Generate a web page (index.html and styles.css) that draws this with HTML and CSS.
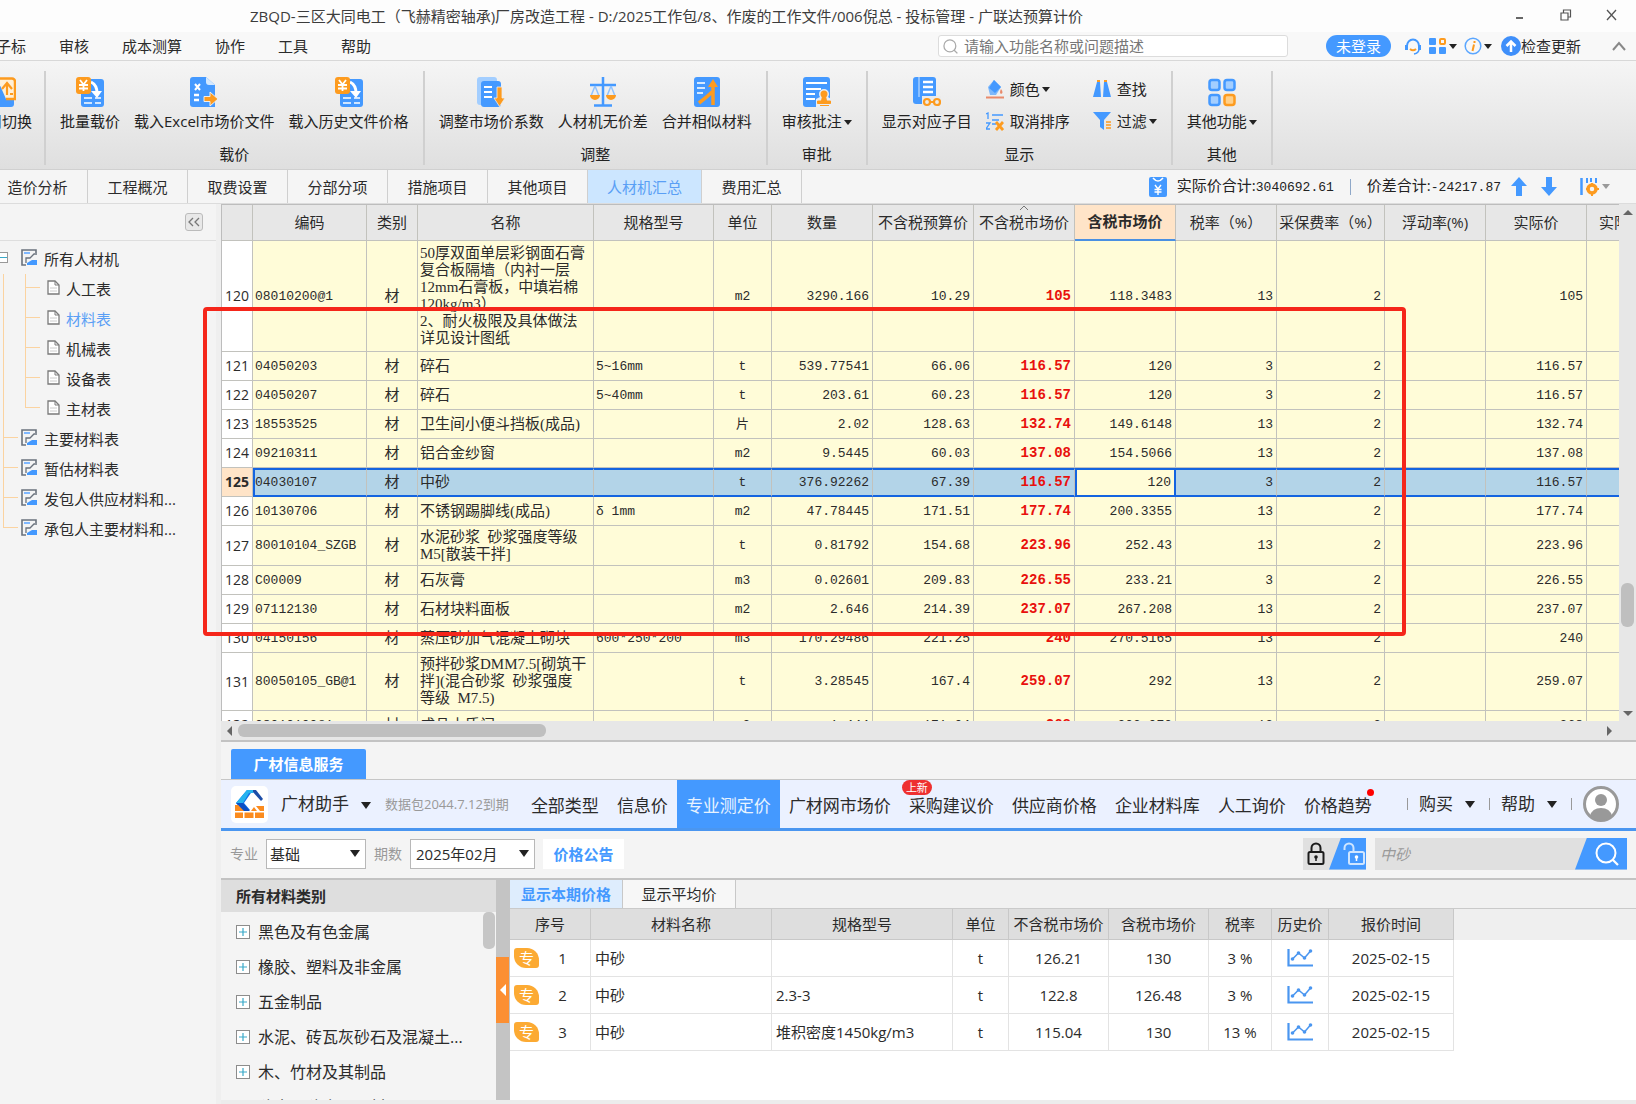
FILE: index.html
```html
<!DOCTYPE html>
<html lang="zh-CN">
<head>
  <meta charset="UTF-8">
  <meta name="viewport" content="width=device-width, initial-scale=1">
  <title>投标管理 - 广联达预算计价</title>
  <link rel="stylesheet" href="styles.css">
</head>
<body>
  <!-- Shared icons -->
  <svg class="sprite" aria-hidden="true">
    <symbol id="i-load" viewBox="0 0 28 30">
      <rect x="5" y="2" width="23" height="28" rx="3" fill="#4499ff"/>
      <path d="M8 21h8M19 21h6M8 26h8M19 26h6" stroke="#cfe5ff" stroke-width="2"/>
      <path d="M15 5q6 3 6 11" fill="none" stroke="#fff" stroke-width="3"/>
      <path d="M15 14h11l-5 7z" fill="#fff"/>
      <rect x="0" y="0" width="15" height="17" rx="3" fill="#fd9b1f"/>
      <path d="M4 3l3.500 4.500L11 3M3 8h9M3 11.500h9M7.500 7v7" fill="none" stroke="#fff" stroke-width="1.800"/>
    </symbol>
    <symbol id="i-excel" viewBox="0 0 28 30">
      <path d="M3 0h13l9 8v22H3a3 3 0 0 1-3-3V3a3 3 0 0 1 3-3z" fill="#4499ff"/>
      <path d="M16 0l9 8h-6a3 3 0 0 1-3-3z" fill="#d5e9ff"/>
      <path d="M5 7l5 6M10 7l-5 6" stroke="#fff" stroke-width="2"/>
      <path d="M4 18h5M4 23h5" stroke="#fff" stroke-width="2.500"/>
      <path d="M14 19.500h6V15l8 7-8 7v-4.500h-6z" fill="#fd9b1f" stroke="#eee" stroke-width="1"/>
    </symbol>
    <symbol id="i-factor" viewBox="0 0 28 30">
      <rect x="0" y="0" width="20" height="28" rx="3" fill="#a3ceff"/>
      <rect x="4" y="4" width="20" height="26" rx="3" fill="#4499ff"/>
      <path d="M7 10h8M7 15h8M7 20h8" stroke="#fff" stroke-width="2"/>
      <path d="M20 10h5v11h3l-5.500 8.500L17 21h3z" fill="#fd9b1f" stroke="#eee" stroke-width=".8"/>
    </symbol>
    <symbol id="i-scale" viewBox="0 0 28 30">
      <path d="M14 0v28M1 8h26M5 28.500h18" stroke="#4499ff" stroke-width="2.500"/>
      <path d="M6 9L2 19M6 9l4 10M22 9l-4 10M22 9l4 10" stroke="#8fc2ff" stroke-width="1.500"/>
      <path d="M1 18h10a5 5 0 0 1-10 0zM17 18h10a5 5 0 0 1-10 0z" fill="#fd9b1f"/>
    </symbol>
    <symbol id="i-merge" viewBox="0 0 28 30">
      <rect x="1" y="0" width="26" height="30" rx="3" fill="#4499ff"/>
      <path d="M4 6h8M4 11h8M4 16h6" stroke="#d5e9ff" stroke-width="2"/>
      <path d="M6 26q8-6 13-11M20 28V8" stroke="#fd9b1f" stroke-width="3.500" fill="none"/>
      <path d="M15 10l5-8 5 8z" fill="#fd9b1f"/>
    </symbol>
    <symbol id="i-stamp" viewBox="0 0 28 30">
      <rect x="0" y="0" width="27" height="30" rx="3" fill="#4499ff"/>
      <path d="M3 6h21M3 12h15M3 17h9M3 22h9" stroke="#fff" stroke-width="2.200"/>
      <path d="M16 17a5 5 0 0 1 10 0q0 2-1 3l3 2v8H13v-8l4-2q-1-1-1-3z" fill="#e8eef5"/>
      <circle cx="21" cy="17" r="3.500" fill="#fd9b1f"/>
      <path d="M19.500 19h3l1 5h4v2.500h-13V24h4zM17 28.500h9" fill="#fd9b1f" stroke="#fd9b1f" stroke-width="1"/>
    </symbol>
    <symbol id="i-items" viewBox="0 0 28 30">
      <rect x="0" y="0" width="23" height="27" rx="3" fill="#4499ff"/>
      <path d="M6 0v20" stroke="#a3ceff" stroke-width="1.500"/>
      <path d="M10 5h10M10 10h10M10 15h10" stroke="#fff" stroke-width="2.500"/>
      <path d="M9 19h19v11H9z" fill="#ebebeb"/>
      <circle cx="14" cy="25" r="3" fill="none" stroke="#fd9b1f" stroke-width="2.200"/>
      <circle cx="24" cy="25" r="3" fill="none" stroke="#fd9b1f" stroke-width="2.200"/>
      <path d="M17 25h4" stroke="#fd9b1f" stroke-width="2"/>
    </symbol>
    <symbol id="i-more" viewBox="0 0 28 30">
      <g fill="#a3ceff" stroke="#4499ff" stroke-width="2.500">
        <rect x="1.500" y="3" width="10" height="10" rx="2.500"/>
        <rect x="16.500" y="3" width="10" height="10" rx="2.500"/>
        <rect x="1.500" y="18" width="10" height="10" rx="2.500"/>
      </g>
      <rect x="16.500" y="18" width="10" height="10" rx="2.500" fill="#ffd08a" stroke="#fd9b1f" stroke-width="2.500"/>
    </symbol>
    <symbol id="i-table" viewBox="0 0 17 17">
      <path d="M15 4V1H1v15h4" fill="none" stroke="#6a727c" stroke-width="1.600"/>
      <path d="M3 4h6" stroke="#7fb8ff" stroke-width="2"/>
      <path d="M5 14V9h4l4-4h3" fill="none" stroke="#6a727c" stroke-width="1.300"/>
      <path d="M6 16v-2l5-3h5v5z" fill="#4499ff"/>
    </symbol>
    <symbol id="i-doc" viewBox="0 0 13 15">
      <path d="M1 1h7l4 4v9H1z" fill="#fff" stroke="#7a7a7a" stroke-width="1.300"/>
      <path d="M8 1v4h4" fill="none" stroke="#7a7a7a" stroke-width="1"/>
      <path d="M3 8h7M3 11h7" stroke="#ccc" stroke-width="1"/>
    </symbol>
    <symbol id="i-plus" viewBox="0 0 14 14">
      <rect x=".5" y=".5" width="13" height="13" fill="#fff" stroke="#8c8c8c"/>
      <path d="M3 7h8M7 3v8" stroke="#39a9c9" stroke-width="1.200"/>
    </symbol>
    <symbol id="i-chart" viewBox="0 0 26 20">
      <path d="M1.500 1v16.500H26" fill="none" stroke="#4a96f0" stroke-width="2.200"/>
      <path d="M5.500 11l6-6 6 5 6-7" fill="none" stroke="#4a96f0" stroke-width="1.600"/>
      <g fill="#4a96f0"><circle cx="5.500" cy="11" r="1.800"/><circle cx="11.500" cy="5" r="1.800"/><circle cx="17.500" cy="10" r="1.800"/><circle cx="23.500" cy="3" r="1.800"/></g>
    </symbol>
    <symbol id="i-search" viewBox="0 0 24 24">
      <circle cx="11" cy="11" r="9.500" fill="none" stroke="currentColor" stroke-width="2"/>
      <path d="M17.500 17.500L23 23" stroke="currentColor" stroke-width="2.200"/>
    </symbol>
  </svg>

  <header class="titlebar">
    <h1>ZBQD-三区大同电工（飞赫精密轴承)厂房改造工程 - D:/2025工作包/8、作废的工作文件/006倪总 - 投标管理 - 广联达预算计价</h1>
    <div class="window-buttons">
      <button aria-label="最小化"><svg width="12" height="12"><path d="M2 9h7" stroke="#666" stroke-width="2"/></svg></button>
      <button aria-label="还原"><svg width="12" height="12"><path d="M3.500 4V1h7v7H8M1 4h7v7H1z" fill="none" stroke="#555" stroke-width="1.200"/></svg></button>
      <button aria-label="关闭"><svg width="12" height="12"><path d="M1 1l9 10M10 1L1 11" stroke="#555" stroke-width="1.300"/></svg></button>
    </div>
  </header>

  <div class="menubar">
    <nav class="menu">
      <a href="#">子标</a><a href="#">审核</a><a href="#">成本测算</a><a href="#">协作</a><a href="#">工具</a><a href="#">帮助</a>
    </nav>
    <label class="top-search">
      <svg width="15" height="15"><use href="#i-search"/></svg>
      <input type="text" placeholder="请输入功能名称或问题描述" aria-label="搜索功能">
    </label>
    <button class="login">未登录</button>
    <div class="top-tools">
      <button aria-label="客服"><svg width="18" height="18"><path d="M3 9a6 6.500 0 0 1 12 0" fill="none" stroke="#4499ff" stroke-width="2"/><path d="M1 8h3v5H1zM14 8h3v5h-3z" fill="#4499ff"/><path d="M15 12q0 4-5 5" fill="none" stroke="#4499ff" stroke-width="1.500"/><path d="M6 12q3 2.500 6 0" fill="none" stroke="#fd9b1f" stroke-width="2"/></svg></button>
      <button aria-label="应用"><svg width="18" height="18"><g fill="#4499ff"><rect x="0" y="1" width="7" height="7" rx="1"/><rect x="0" y="10" width="7" height="7" rx="1"/><rect x="10" y="10" width="7" height="7" rx="1"/></g><rect x="11" y="2" width="5" height="5" rx="1" fill="none" stroke="#fd9b1f" stroke-width="2"/></svg><i class="caret"></i></button>
      <button aria-label="信息"><svg width="18" height="18"><circle cx="9" cy="9" r="7.800" fill="none" stroke="#5aa6ff" stroke-width="1.500"/><path d="M10 7.500L8.500 14M10.500 4v2" stroke="#fd9b1f" stroke-width="2"/></svg><i class="caret"></i></button>
      <button class="update"><svg width="20" height="20"><circle cx="10" cy="10" r="10" fill="#3f8ffa"/><path d="M10 16V6M5.500 10L10 5.500l4.500 4.500" fill="none" stroke="#fff" stroke-width="2.500"/></svg>检查更新</button>
    </div>
    <button class="fold" aria-label="收起功能区"><svg width="14" height="10"><path d="M1 9l6-7 6 7" fill="none" stroke="#888" stroke-width="2"/></svg></button>
  </div>

  <div class="ribbon">
    <section class="group group-cut">
      <div class="tools"><button class="tool"><svg width="28" height="30"><rect x="6" y="8" width="20" height="22" rx="3" fill="#4499ff"/><path d="M9 1.500h15a3 3 0 0 1 3 3V22h-9" fill="#fff0d8" stroke="#fd9b1f" stroke-width="2.500"/><path d="M14 12l5-6 5 6M19 6v12M22 17h3" fill="none" stroke="#fd9b1f" stroke-width="2.200"/></svg>费用切换</button></div>
      <h2>&nbsp;</h2>
    </section>
    <section class="group">
      <div class="tools">
        <button class="tool"><svg width="28" height="30"><use href="#i-load"/></svg>批量载价</button>
        <button class="tool"><svg width="28" height="30"><use href="#i-excel"/></svg>载入Excel市场价文件</button>
        <button class="tool"><svg width="28" height="30"><use href="#i-load"/></svg>载入历史文件价格</button>
      </div>
      <h2>载价</h2>
    </section>
    <section class="group">
      <div class="tools">
        <button class="tool"><svg width="28" height="30"><use href="#i-factor"/></svg>调整市场价系数</button>
        <button class="tool"><svg width="28" height="30"><use href="#i-scale"/></svg>人材机无价差</button>
        <button class="tool"><svg width="28" height="30"><use href="#i-merge"/></svg>合并相似材料</button>
      </div>
      <h2>调整</h2>
    </section>
    <section class="group">
      <div class="tools">
        <button class="tool"><svg width="28" height="30"><use href="#i-stamp"/></svg><span>审核批注<i class="caret"></i></span></button>
      </div>
      <h2>审批</h2>
    </section>
    <section class="group">
      <div class="tools">
        <button class="tool"><svg width="28" height="30"><use href="#i-items"/></svg>显示对应子目</button>
        <div class="tool-grid">
          <button><svg width="18" height="20"><path d="M8 1l7 7-5 8H4L2 8z" fill="#7db8fb"/><path d="M8 1l7 7-6 6-6-5z" fill="#4499ff"/><path d="M15 10q3 4 0 5-2-1 0-5z" fill="#e98a6b"/><path d="M0 18.500h18" stroke="#e98a6b" stroke-width="2"/></svg>颜色<i class="caret"></i></button>
          <button><svg width="18" height="20"><path d="M4 3h3l1 15H0zM11 3h3l4 15h-8z" fill="#4499ff"/><path d="M4 1h3v2H4zM11 1h3v2h-3z" fill="#fd9b1f"/></svg>查找</button>
          <button><svg width="18" height="20"><path d="M0 3l2-1v6M0 12h4l-4 6h4" fill="none" stroke="#4499ff" stroke-width="1.300"/><path d="M6 4h11M6 9h7M6 13h4" stroke="#4499ff" stroke-width="1.600"/><path d="M10 11l7 8M17 11l-7 8" stroke="#fd9b1f" stroke-width="2.800"/></svg>取消排序</button>
          <button><svg width="18" height="20"><path d="M0 1h18l-7 8v10l-4-3V9z" fill="#4499ff"/><path d="M13 11h5M13 14h5M13 17h5" stroke="#fd9b1f" stroke-width="1.500"/></svg>过滤<i class="caret"></i></button>
        </div>
      </div>
      <h2>显示</h2>
    </section>
    <section class="group">
      <div class="tools">
        <button class="tool"><svg width="28" height="30"><use href="#i-more"/></svg><span>其他功能<i class="caret"></i></span></button>
      </div>
      <h2>其他</h2>
    </section>
  </div>

  <div class="tabbar">
    <nav class="tabs">
      <a href="#">造价分析</a><a href="#">工程概况</a><a href="#">取费设置</a><a href="#">分部分项</a><a href="#">措施项目</a><a href="#">其他项目</a><a href="#" class="active">人材机汇总</a><a href="#">费用汇总</a>
    </nav>
    <div class="totals">
      <svg width="18" height="20"><rect width="18" height="20" rx="2" fill="#4499ff"/><path d="M4 1q5 6 10 0" fill="none" stroke="#fff" stroke-width="1.500"/><path d="M6 8l3 4 3-4M5.500 12.500h7M5.500 15h7M9 12v6" fill="none" stroke="#fff" stroke-width="1.400"/></svg>
      <span class="total">实际价合计:<b>3040692.61</b></span>
      <span class="total-sep"></span>
      <span class="total">价差合计:<b>-24217.87</b></span>
      <button aria-label="上移"><svg width="16" height="20"><path d="M8 0l8 9h-5v10H5V9H0z" fill="#4499ff"/></svg></button>
      <button aria-label="下移"><svg width="16" height="20"><path d="M8 19l8-9h-5V0H5v10H0z" fill="#4499ff"/></svg></button>
      <button class="columns" aria-label="列设置"><svg width="20" height="20"><path d="M1.500 1v17" stroke="#4499ff" stroke-width="2.500"/><path d="M7 1v5M11 1v4M16 1v5" stroke="#4499ff" stroke-width="2"/><circle cx="12" cy="12" r="4" fill="none" stroke="#fd9b1f" stroke-width="3.500"/><path d="M12 6v2M12 16v3M6 12h2M16 12h3" stroke="#fd9b1f" stroke-width="2"/></svg><i class="caret caret-grey"></i></button>
    </div>
  </div>

  <div class="workspace">
    <aside class="sidebar">
      <div class="sidebar-head"><button aria-label="收起侧栏"><svg width="12" height="10"><path d="M5 1L1 5l4 4M11 1L7 5l4 4" fill="none" stroke="#777" stroke-width="1.300"/></svg></button></div>
      <ul class="tree">
        <li><span class="line expander"></span><svg width="17" height="17"><use href="#i-table"/></svg><a href="#">所有人材机</a></li>
        <li><span class="line trunk"></span><span class="line tee"></span><svg width="13" height="15"><use href="#i-doc"/></svg><a href="#">人工表</a></li>
        <li><span class="line trunk"></span><span class="line tee"></span><svg width="13" height="15"><use href="#i-doc"/></svg><a href="#" class="active">材料表</a></li>
        <li><span class="line trunk"></span><span class="line tee"></span><svg width="13" height="15"><use href="#i-doc"/></svg><a href="#">机械表</a></li>
        <li><span class="line trunk"></span><span class="line tee"></span><svg width="13" height="15"><use href="#i-doc"/></svg><a href="#">设备表</a></li>
        <li><span class="line trunk"></span><span class="line tee end"></span><svg width="13" height="15"><use href="#i-doc"/></svg><a href="#">主材表</a></li>
        <li><span class="line tee"></span><svg width="17" height="17"><use href="#i-table"/></svg><a href="#">主要材料表</a></li>
        <li><span class="line tee"></span><svg width="17" height="17"><use href="#i-table"/></svg><a href="#">暂估材料表</a></li>
        <li><span class="line tee"></span><svg width="17" height="17"><use href="#i-table"/></svg><a href="#">发包人供应材料和...</a></li>
        <li><span class="line tee end"></span><svg width="17" height="17"><use href="#i-table"/></svg><a href="#">承包人主要材料和...</a></li>
      </ul>
    </aside>

    <main class="main">
      <div class="grid-area">
        <div class="grid-scroll">
          <table class="grid">
            <colgroup>
              <col class="c-no"><col class="c-code"><col class="c-kind"><col class="c-name"><col class="c-spec"><col class="c-unit">
              <col class="c-num"><col class="c-num"><col class="c-num"><col class="c-num"><col class="c-num"><col class="c-fee"><col class="c-num"><col class="c-num"><col>
            </colgroup>
            <thead>
              <tr><th></th><th>编码</th><th>类别</th><th>名称</th><th>规格型号</th><th>单位</th><th>数量</th><th>不含税预算价</th><th class="sorted">不含税市场价</th><th class="current">含税市场价</th><th>税率（%）</th><th>采保费率（%）</th><th>浮动率(%)</th><th>实际价</th><th>实际价合计</th></tr>
            </thead>
            <tbody>
              <tr class="tall"><th>120</th><td>08010200@1</td><td>材</td><td>50厚双面单层彩钢面石膏<br>复合板隔墙（内衬一层<br>12mm石膏板，中填岩棉<br>120kg/m3）<br>2、耐火极限及具体做法<br>详见设计图纸</td><td></td><td>m2</td><td>3290.166</td><td>10.29</td><td>105</td><td>118.3483</td><td>13</td><td>2</td><td></td><td>105</td><td></td></tr>
              <tr><th>121</th><td>04050203</td><td>材</td><td>碎石</td><td>5~16mm</td><td>t</td><td>539.77541</td><td>66.06</td><td>116.57</td><td>120</td><td>3</td><td>2</td><td></td><td>116.57</td><td></td></tr>
              <tr><th>122</th><td>04050207</td><td>材</td><td>碎石</td><td>5~40mm</td><td>t</td><td>203.61</td><td>60.23</td><td>116.57</td><td>120</td><td>3</td><td>2</td><td></td><td>116.57</td><td></td></tr>
              <tr><th>123</th><td>18553525</td><td>材</td><td>卫生间小便斗挡板(成品)</td><td></td><td>片</td><td>2.02</td><td>128.63</td><td>132.74</td><td>149.6148</td><td>13</td><td>2</td><td></td><td>132.74</td><td></td></tr>
              <tr><th>124</th><td>09210311</td><td>材</td><td>铝合金纱窗</td><td></td><td>m2</td><td>9.5445</td><td>60.03</td><td>137.08</td><td>154.5066</td><td>13</td><td>2</td><td></td><td>137.08</td><td></td></tr>
              <tr class="selected"><th>125</th><td>04030107</td><td>材</td><td>中砂</td><td></td><td>t</td><td>376.92262</td><td>67.39</td><td>116.57</td><td class="editing">120</td><td>3</td><td>2</td><td></td><td>116.57</td><td></td></tr>
              <tr><th>126</th><td>10130706</td><td>材</td><td>不锈钢踢脚线(成品)</td><td>δ 1mm</td><td>m2</td><td>47.78445</td><td>171.51</td><td>177.74</td><td>200.3355</td><td>13</td><td>2</td><td></td><td>177.74</td><td></td></tr>
              <tr class="two-line"><th>127</th><td>80010104_SZGB</td><td>材</td><td>水泥砂浆&ensp;砂浆强度等级<br>M5[散装干拌]</td><td></td><td>t</td><td>0.81792</td><td>154.68</td><td>223.96</td><td>252.43</td><td>13</td><td>2</td><td></td><td>223.96</td><td></td></tr>
              <tr><th>128</th><td>C00009</td><td>材</td><td>石灰膏</td><td></td><td>m3</td><td>0.02601</td><td>209.83</td><td>226.55</td><td>233.21</td><td>3</td><td>2</td><td></td><td>226.55</td><td></td></tr>
              <tr><th>129</th><td>07112130</td><td>材</td><td>石材块料面板</td><td></td><td>m2</td><td>2.646</td><td>214.39</td><td>237.07</td><td>267.208</td><td>13</td><td>2</td><td></td><td>237.07</td><td></td></tr>
              <tr><th>130</th><td>04150156</td><td>材</td><td>蒸压砂加气混凝土砌块</td><td>600*250*200</td><td>m3</td><td>170.29486</td><td>221.25</td><td>240</td><td>270.5165</td><td>13</td><td>2</td><td></td><td>240</td><td></td></tr>
              <tr class="three-line"><th>131</th><td>80050105_GB@1</td><td>材</td><td>预拌砂浆DMM7.5[砌筑干<br>拌](混合砂浆&ensp;砂浆强度<br>等级&ensp;M7.5)</td><td></td><td>t</td><td>3.28545</td><td>167.4</td><td>259.07</td><td>292</td><td>13</td><td>2</td><td></td><td>259.07</td><td></td></tr>
              <tr><th>132</th><td>08010100@1</td><td>材</td><td>成品木质门</td><td></td><td>m2</td><td>1.444</td><td>171.04</td><td>268</td><td>302.070</td><td>13</td><td>2</td><td></td><td>268</td><td></td></tr>
            </tbody>
          </table>
        </div>
        <div class="vscroll"><i class="arrow up"></i><i class="thumb"></i><i class="arrow down"></i></div>
        <div class="hscroll"><i class="arrow left"></i><i class="thumb"></i><i class="arrow right"></i></div>
        <div class="highlight-box"></div>
      </div>

      <section class="service">
        <div class="service-tabs"><button>广材信息服务</button></div>
        <div class="assist-bar">
          <svg class="logo" width="37" height="37" viewBox="0 0 37 37"><rect width="37" height="37" rx="5" fill="#fff"/><path d="M5 17L16 4h6L13 17l6 7h-6z" fill="#1272e8"/><path d="M16 4h9l-3 3h-4l-6 10-7 0z" fill="#25b3ef"/><path d="M22 4h3l7 9-2 2-8-9z" fill="#1c4da8"/><path d="M5 17h7l7 8h-7z" fill="#0b4fc4"/><g fill="#fb8b1e"><path d="M4 19h3l6 6H4zM20 25l3-4 3 4zM25 20h8v5h-4zM4 26.500h8V32H4zM13.500 26.500h9V32h-9zM24 26.500h9V32h-9z"/></g></svg>
          <button class="assist-name">广材助手<i class="caret caret-big"></i></button>
          <span class="expiry">数据包2044.7.12到期</span>
          <nav class="price-nav">
            <a href="#">全部类型</a><a href="#">信息价</a><a href="#" class="active">专业测定价</a><a href="#">广材网市场价</a><a href="#">采购建议价<em class="new">上新</em></a><a href="#">供应商价格</a><a href="#">企业材料库</a><a href="#">人工询价</a><a href="#">价格趋势<em class="dot"></em></a>
          </nav>
          <div class="account">
            <button>购买<i class="caret caret-big"></i></button>
            <button>帮助<i class="caret caret-big"></i></button>
            <a href="#" aria-label="用户"><svg width="36" height="36"><circle cx="18" cy="18" r="16.500" fill="#fff" stroke="#999" stroke-width="3"/><circle cx="18" cy="14" r="6" fill="#999"/><path d="M7 30q2-8 11-8t11 8q-11 9-22 0z" fill="#999"/></svg></a>
          </div>
        </div>

        <div class="filters">
          <label for="major">专业</label>
          <select id="major" class="major"><option>基础</option></select>
          <label for="period">期数</label>
          <select id="period" class="period"><option>2025年02月</option></select>
          <button class="notice">价格公告</button>
          <div class="locks">
            <button aria-label="锁定"><svg width="18" height="24"><path d="M4.500 10V6a4.500 4.500 0 0 1 9 0v4" fill="none" stroke="#1c1c1c" stroke-width="2"/><rect x="1.500" y="10" width="15" height="12" rx="1.500" fill="none" stroke="#1c1c1c" stroke-width="2"/><circle cx="9" cy="15" r="1.800" fill="#1c1c1c"/><path d="M9 15v4" stroke="#1c1c1c" stroke-width="1.500"/></svg></button>
            <button class="unlock" aria-label="解锁"><svg width="23" height="24"><path d="M1.500 8V6a4.500 4.500 0 0 1 9 0v4" fill="none" stroke="#cfe5ff" stroke-width="2"/><rect x="6" y="10" width="15" height="12" rx="1.500" fill="none" stroke="#cfe5ff" stroke-width="2"/><circle cx="13.500" cy="15" r="1.800" fill="#fff"/><path d="M13.500 15v4" stroke="#fff" stroke-width="1.500"/></svg></button>
          </div>
          <div class="material-search">
            <input type="text" placeholder="中砂" aria-label="搜索材料">
            <button aria-label="搜索"><svg width="24" height="24"><use href="#i-search"/></svg></button>
          </div>
        </div>

        <div class="result">
          <div class="categories">
            <h3>所有材料类别</h3>
            <div class="category-body">
              <ul>
                <li><svg width="14" height="14"><use href="#i-plus"/></svg>黑色及有色金属</li>
                <li><svg width="14" height="14"><use href="#i-plus"/></svg>橡胶、塑料及非金属</li>
                <li><svg width="14" height="14"><use href="#i-plus"/></svg>五金制品</li>
                <li><svg width="14" height="14"><use href="#i-plus"/></svg>水泥、砖瓦灰砂石及混凝土...</li>
                <li><svg width="14" height="14"><use href="#i-plus"/></svg>木、竹材及其制品</li>
                <li><svg width="14" height="14"><use href="#i-plus"/></svg>防水、防腐及石材</li>
              </ul>
              <i class="thumb"></i>
            </div>
          </div>
          <div class="splitter"><button aria-label="收起类别"><svg width="6" height="12"><path d="M6 0v12L0 6z" fill="#fff"/></svg></button></div>
          <div class="prices">
            <div class="price-tabs"><button class="active">显示本期价格</button><button>显示平均价</button></div>
            <table class="price-table">
              <colgroup><col class="p-no"><col class="p-text"><col class="p-text"><col class="p-unit"><col class="p-price"><col class="p-price"><col class="p-tax"><col class="p-hist"><col class="p-date"><col></colgroup>
              <thead><tr><th>序号</th><th>材料名称</th><th>规格型号</th><th>单位</th><th>不含税市场价</th><th>含税市场价</th><th>税率</th><th>历史价</th><th>报价时间</th><th class="rest"></th></tr></thead>
              <tbody>
                <tr><td><div class="no"><em>专</em><span>1</span></div></td><td>中砂</td><td></td><td>t</td><td>126.21</td><td>130</td><td>3 %</td><td><svg width="26" height="20"><use href="#i-chart"/></svg></td><td>2025-02-15</td><td class="rest"></td></tr>
                <tr><td><div class="no"><em>专</em><span>2</span></div></td><td>中砂</td><td>2.3-3</td><td>t</td><td>122.8</td><td>126.48</td><td>3 %</td><td><svg width="26" height="20"><use href="#i-chart"/></svg></td><td>2025-02-15</td><td class="rest"></td></tr>
                <tr><td><div class="no"><em>专</em><span>3</span></div></td><td>中砂</td><td>堆积密度1450kg/m3</td><td>t</td><td>115.04</td><td>130</td><td>13 %</td><td><svg width="26" height="20"><use href="#i-chart"/></svg></td><td>2025-02-15</td><td class="rest"></td></tr>
              </tbody>
            </table>
          </div>
        </div>
      </section>
    </main>
  </div>
</body>
</html>
```
FILE: styles.css
```css
/* Base */
* {
  box-sizing: border-box;
}
body {
  margin: 0;
  height: 100vh;
  display: flex;
  flex-direction: column;
  overflow: hidden;
  background: #f4f4f4;
  color: #2b2b2b;
  font-family: "Open Sans", "Noto Sans CJK SC", sans-serif;
  font-size: 15px;
  line-height: 20px;
}
button {
  padding: 0;
  border: none;
  background: none;
  color: inherit;
  font: inherit;
  white-space: nowrap;
  cursor: pointer;
}
input, select {
  font: inherit;
  color: inherit;
}
a {
  color: inherit;
  text-decoration: none;
  white-space: nowrap;
}
h1, h2, h3, ul {
  margin: 0;
  padding: 0;
  font-size: 15px;
  font-weight: normal;
  list-style: none;
}
svg {
  display: block;
  flex: none;
}
em {
  font-style: normal;
}
.sprite {
  position: absolute;
  width: 0;
  height: 0;
}
.caret {
  display: inline-block;
  margin-left: 2px;
  vertical-align: middle;
  border: 4px solid transparent;
  border-top: 5px solid #222;
  border-bottom: 0;
}
.caret-grey {
  border-top-color: #999;
}
.caret-big {
  margin-left: 12px;
  border-width: 7px 5px 0;
}

/* Title bar */
.titlebar {
  display: flex;
  align-items: center;
  height: 32px;
  padding: 0 18px 0 250px;
  background: #fdfdfd;
}
.titlebar h1 {
  flex: 1;
  color: #3c3c3c;
  white-space: nowrap;
}
.window-buttons {
  display: flex;
  gap: 34px;
  padding-bottom: 3px;
}

/* Menu row */
.menubar {
  display: flex;
  align-items: center;
  height: 29px;
  padding: 0 10px 0 0;
  background: #f8f8f8;
  border-bottom: 1px solid #d8d8d8;
}
.menu {
  display: flex;
  gap: 33px;
  flex: 1;
  margin-left: -4px;
}
.top-search {
  display: flex;
  align-items: center;
  gap: 6px;
  width: 350px;
  height: 22px;
  padding: 0 4px;
  background: #fff;
  border: 1px solid #dcdcdc;
  border-radius: 3px;
  color: #aaa;
}
.top-search input {
  flex: 1;
  min-width: 0;
  height: 20px;
  padding: 0;
  border: none;
  outline: none;
  background: none;
}
.top-search input::placeholder {
  color: #777;
}
.login {
  width: 65px;
  height: 22px;
  margin: 0 13px 0 38px;
  border-radius: 11px;
  background: #4499ff;
  color: #fff;
  line-height: 22px;
}
.top-tools {
  display: flex;
  gap: 7px;
}
.top-tools button {
  display: flex;
  align-items: center;
}
.top-tools .update {
  margin-left: 2px;
}
.fold {
  margin-left: 31px;
}

/* Ribbon */
.ribbon {
  display: flex;
  height: 109px;
  padding: 10px 0 4px;
  background: linear-gradient(#f5f5f5, #dfdfdf);
  border-bottom: 1px solid #d0d0d0;
  color: #222;
}
.group {
  padding: 6px 14px 0;
  border-right: 2px solid #d0d0d0;
}
.group-cut {
  width: 46px;
  display: flex;
  flex-direction: column;
  align-items: flex-end;
  padding: 6px 12px 0 0;
  overflow: hidden;
}
.tools {
  display: flex;
  gap: 14px;
  height: 66px;
}
.group h2 {
  line-height: 22px;
  text-align: center;
}
.tool {
  display: flex;
  flex-direction: column;
  align-items: center;
  gap: 4px;
  height: 56px;
}
.tool-grid {
  display: grid;
  grid-template-columns: auto auto;
  gap: 12px 23px;
  align-content: start;
  padding: 2px 0 0;
}
.tool-grid button {
  display: flex;
  align-items: center;
}
.tool-grid svg {
  margin-right: 6px;
}

/* Project tabs */
.tabbar {
  display: flex;
  justify-content: space-between;
  height: 34px;
  background: #f5f5f5;
  border-bottom: 1px solid #dcdcdc;
}
.tabs {
  display: flex;
  margin-left: -12px;
}
.tabs a {
  min-width: 100px;
  padding: 0 19px;
  border-right: 1px solid #cfcfcf;
  line-height: 34px;
  text-align: center;
}
.tabs .active {
  background: #cce6ff;
  color: #5a9ff5;
}
.totals {
  display: flex;
  align-items: center;
  gap: 10px;
  padding-right: 26px;
  color: #222;
}
.total {
  white-space: nowrap;
}
.total b {
  font: 13px/20px "Liberation Mono", monospace;
}
.total-sep {
  width: 1px;
  height: 16px;
  margin: 0 6px;
  background: #8fa8c8;
}
.totals button {
  display: flex;
  align-items: center;
  margin-right: 4px;
}
.totals .columns {
  margin: 0 0 0 9px;
}

/* Workspace */
.workspace {
  display: flex;
  flex: 1;
  min-height: 0;
}
.sidebar {
  width: 221px;
  flex: none;
  border-right: 5px solid #efefef;
}
.sidebar-head {
  display: flex;
  justify-content: flex-end;
  height: 37px;
  padding: 9px 13px 0 0;
  border-bottom: 1px solid #dedede;
}
.sidebar-head button {
  display: flex;
  align-items: center;
  justify-content: center;
  width: 18px;
  height: 18px;
  border: 1px solid #bbb;
  border-radius: 3px;
  background: #e8e8e8;
}
.tree {
  padding: 3px 0 0 3px;
}
.tree li {
  display: flex;
  align-items: center;
  height: 30px;
}
.tree li svg {
  margin: 0 6px 4px 0;
}
.tree .active {
  color: #5a9ff5;
}
.line {
  align-self: stretch;
  width: 18px;
  background: linear-gradient(#fbd3a0, #fbd3a0) 0 0 / 1px 100% no-repeat;
}
.line.trunk {
  width: 22px;
}
.line.tee {
  margin-right: 3px;
  width: 15px;
  background: linear-gradient(#fbd3a0, #fbd3a0) 0 0 / 1px 100% no-repeat, linear-gradient(#fbd3a0, #fbd3a0) 0 13px / 100% 1px no-repeat;
}
.line.end {
  background-size: 1px 14px, 100% 1px;
}
.line.trunk + .line.tee {
  margin-right: 7px;
}
.line.expander {
  align-self: center;
  width: 10px;
  height: 11px;
  margin: 0 13px 4px -5px;
  border: 1px solid #999;
  background: linear-gradient(#39a9c9, #39a9c9) center / 8px 1px no-repeat #fff;
}
.main {
  display: flex;
  flex: 1;
  flex-direction: column;
  min-width: 0;
}

/* Material grid */
.grid-area {
  position: relative;
  display: grid;
  grid-template: 517px 19px / 1fr 17px;
  border-bottom: 2px solid #c3c3c3;
  background: #e7e7e7;
}
.grid-scroll {
  overflow: hidden;
}
.grid {
  width: 100%;
  table-layout: fixed;
  border-spacing: 0;
  border-top: 1px solid #bdbdbd;
  border-left: 1px solid #bdbdbd;
}
.c-no { width: 31px; }
.c-code { width: 114px; }
.c-kind { width: 51px; }
.c-name { width: 176px; }
.c-spec { width: 120px; }
.c-unit { width: 58px; }
.c-num { width: 101px; }
.c-fee { width: 108px; }
.grid th, .grid td {
  height: 29px;
  padding: 0 3px;
  border-right: 1px solid #c2c2bd;
  border-bottom: 1px solid #c2c2bd;
  overflow: hidden;
  white-space: nowrap;
}
.grid thead th {
  height: 36px;
  padding: 0 0 2px;
  background: #e7e7e7;
  font-weight: normal;
}
.grid thead th:last-child {
  padding-left: 12px;
  border-right: none;
  text-align: left;
}
.grid thead .sorted {
  background: url("data:image/svg+xml,%3Csvg xmlns='http://www.w3.org/2000/svg' width='10' height='6'%3E%3Cpath d='M1 5l4-4 4 4' fill='none' stroke='%23777'/%3E%3C/svg%3E") top / 10px 6px no-repeat #e7e7e7;
}
.grid thead .current {
  background: #ffe4c8;
  border-bottom: 2px solid #4a90e2;
  font-weight: bold;
}
.grid td {
  background: #fffcd8;
  font-family: "Liberation Mono", "Noto Sans CJK SC", monospace;
  font-size: 13px;
  line-height: 17px;
  text-align: right;
}
.grid td:last-child {
  border-right: none;
}
.grid tbody th {
  background: #fff;
  font-size: 14px;
  font-weight: normal;
}
.grid td:nth-child(2), .grid td:nth-child(4), .grid td:nth-child(5) {
  padding: 0 2px;
  text-align: left;
}
.grid td:nth-child(3), .grid td:nth-child(6) {
  text-align: center;
}
.grid td:nth-child(3), .grid td:nth-child(4) {
  font-family: "Liberation Serif", "Noto Sans CJK SC", serif;
  font-size: 15px;
}
.grid td:nth-child(9) {
  color: #e8100c;
  font-size: 14px;
  font-weight: bold;
}
.grid .tall td { height: 111px; }
.grid .two-line td { height: 40px; }
.grid .three-line td { height: 58px; }
.grid .selected th {
  background: #ffe4c8;
  font-weight: bold;
}
.grid .selected td {
  background: #b3d4e8;
  border-top: 2px solid #1464e0;
  border-bottom: 2px solid #1464e0;
}
.grid .selected td:nth-child(2) {
  padding-left: 0;
  border-left: 2px solid #1464e0;
}
.grid .selected .editing {
  background: #fffcd8;
  border: 2px solid #1464e0;
}

/* Scroll bars */
.vscroll {
  display: flex;
  flex-direction: column;
  align-items: center;
  justify-content: space-between;
  padding: 6px 0 5px;
}
.vscroll .thumb {
  width: 13px;
  height: 44px;
  margin-top: 284px;
  border-radius: 6px;
  background: #bfbfbf;
}
.hscroll {
  display: flex;
  align-items: center;
  padding: 0 7px 0 6px;
}
.hscroll .thumb {
  width: 308px;
  height: 13px;
  margin: 0 auto 0 6px;
  border-radius: 6px;
  background: #bfbfbf;
}
.arrow {
  border: 5px solid transparent;
}
.arrow.up { border-bottom-color: #666; border-top: 0; }
.arrow.down { border-top-color: #666; border-bottom: 0; }
.arrow.left { border-right-color: #666; border-left: 0; }
.arrow.right { border-left-color: #666; border-right: 0; }

/* Marked region over the grid */
.highlight-box {
  position: absolute;
  top: 103px;
  left: -18px;
  width: 1203px;
  height: 329px;
  border: 4px solid #f5261a;
  border-radius: 4px;
  pointer-events: none;
}

/* Price service */
.service {
  display: flex;
  flex: 1;
  flex-direction: column;
  min-height: 0;
  border-bottom: 4px solid #ececec;
}
.service-tabs {
  height: 38px;
  padding: 7px 0 0 10px;
  border-bottom: 1px solid #c6c6c6;
}
.service-tabs button {
  width: 135px;
  height: 30px;
  border-radius: 2px 2px 0 0;
  background: #4499ff;
  color: #fff;
  font-weight: bold;
}
.assist-bar {
  display: flex;
  align-items: center;
  height: 51px;
  padding-left: 10px;
  border-bottom: 3px solid #4a96f0;
  background: #ebf1ff;
  font-size: 17px;
}
.assist-name {
  margin: 0 14px 0 13px;
}
.expiry {
  color: #999;
  font-size: 13px;
  white-space: nowrap;
}
.price-nav {
  display: flex;
  align-self: stretch;
  margin-left: 13px;
}
.price-nav a {
  position: relative;
  padding: 0 9px;
  line-height: 52px;
}
.price-nav .active {
  background: #4499ff;
  color: #e8f3ff;
}
.new {
  position: absolute;
  top: 0;
  left: 2px;
  width: 30px;
  border-radius: 8px;
  background: #ee3030;
  color: #fff;
  font-size: 11px;
  line-height: 15px;
  text-align: center;
}
.dot {
  position: absolute;
  top: 9px;
  right: 7px;
  width: 7px;
  height: 7px;
  border-radius: 50%;
  background: #f00;
}
.account {
  display: flex;
  align-items: center;
  margin-left: auto;
  padding-right: 17px;
}
.account button, .account a {
  display: flex;
  align-items: center;
  padding: 0 14px 0 12px;
  background: linear-gradient(#999, #999) left / 1px 12px no-repeat;
}
.account a {
  padding-right: 0;
}

/* Filters */
.filters {
  display: flex;
  align-items: center;
  height: 49px;
  padding: 0 9px 2px;
  border-bottom: 2px solid #c3c3c3;
}
.filters label {
  color: #999;
  font-size: 14px;
}
.filters select {
  height: 30px;
  margin: 0 8px;
  padding: 0 3px;
  border: 1px solid #b8b8b8;
  border-radius: 0;
  appearance: none;
  background: url("data:image/svg+xml,%3Csvg xmlns='http://www.w3.org/2000/svg' width='10' height='7'%3E%3Cpath d='M0 0h10L5 7z' fill='%23222'/%3E%3C/svg%3E") right 5px center / 10px 7px no-repeat #fff;
}
.filters .major {
  width: 100px;
}
.filters .period {
  width: 125px;
  padding-left: 5px;
}
.notice {
  width: 81px;
  height: 30px;
  background: #fff;
  color: #4499ff;
  font-weight: bold;
}
.locks {
  display: flex;
  align-items: center;
  width: 63px;
  height: 32px;
  margin: 0 9px 0 auto;
  padding-left: 4px;
  background: #e0e0e0;
}
.unlock {
  display: flex;
  align-items: center;
  justify-content: flex-end;
  width: 37px;
  height: 32px;
  margin-left: auto;
  background: #4499ff;
  clip-path: polygon(12px 0, 100% 0, 100% 100%, 0 100%);
}
.material-search {
  display: flex;
  width: 252px;
  height: 32px;
  background: #e0e0e0;
}
.material-search input {
  flex: 1;
  min-width: 0;
  padding: 0 5px;
  border: none;
  outline: none;
  background: none;
  font-style: italic;
}
.material-search input::placeholder {
  color: #999;
}
.material-search button {
  display: flex;
  align-items: center;
  justify-content: flex-end;
  width: 52px;
  padding-right: 8px;
  background: #4499ff;
  color: #fff;
  clip-path: polygon(12px 0, 100% 0, 100% 100%, 0 100%);
}

/* Categories and prices */
.result {
  display: flex;
  flex: 1;
  min-height: 0;
}
.categories {
  display: flex;
  flex-direction: column;
  width: 275px;
  min-height: 0;
}
.categories h3 {
  padding-left: 15px;
  background: #dedede;
  font-weight: bold;
  line-height: 32px;
}
.category-body {
  display: flex;
  flex: 1;
  justify-content: space-between;
  min-height: 0;
  overflow: hidden;
}
.category-body ul {
  padding-top: 2px;
}
.category-body li {
  display: flex;
  align-items: center;
  gap: 8px;
  height: 35px;
  padding-left: 15px;
  font-size: 16px;
  white-space: nowrap;
}
.category-body .thumb {
  width: 12px;
  height: 37px;
  margin-right: 1px;
  border-radius: 5px;
  background: #c6c6c6;
}
.splitter {
  display: flex;
  width: 14px;
  padding-top: 77px;
  background: #c4c4c4;
}
.splitter button {
  display: flex;
  align-items: center;
  justify-content: center;
  width: 13px;
  height: 66px;
  background: #fc8f32;
}
.prices {
  flex: 1;
  min-width: 0;
  background: #fff;
}
.price-tabs {
  display: flex;
  height: 28px;
  background: #f1f1f1;
}
.price-tabs button {
  width: 113px;
  border-right: 1px solid #c8c8c8;
  background: #f7f7f7;
}
.price-tabs .active {
  background: #deedfd;
  color: #4499ff;
  font-weight: bold;
}
.price-table {
  width: 100%;
  table-layout: fixed;
  border-spacing: 0;
  border-top: 1px solid #cacaca;
}
.p-no { width: 81px; }
.p-text { width: 181px; }
.p-unit { width: 56px; }
.p-price { width: 100px; }
.p-tax { width: 63px; }
.p-hist { width: 57px; }
.p-date { width: 125px; }
.price-table th, .price-table td {
  height: 37px;
  padding: 0 4px;
  border-right: 1px solid #e3e3e3;
  border-bottom: 1px solid #e3e3e3;
  text-align: center;
  white-space: nowrap;
}
.price-table th {
  height: 31px;
  padding: 0;
  border-color: #c8c8c8;
  background: #dedede;
  font-weight: normal;
}
.price-table td:nth-child(2), .price-table td:nth-child(3) {
  text-align: left;
}
.price-table td svg {
  margin: 0 auto;
}
.price-table .rest {
  border: none;
}
.price-table th.rest {
  background: #efefef;
}
.no {
  display: flex;
  align-items: center;
}
.no em {
  width: 27px;
  border-radius: 3px 12px 3px 12px;
  background: #fcaa33;
  color: #fff;
  line-height: 20px;
}
.no span {
  width: 50px;
}
```
